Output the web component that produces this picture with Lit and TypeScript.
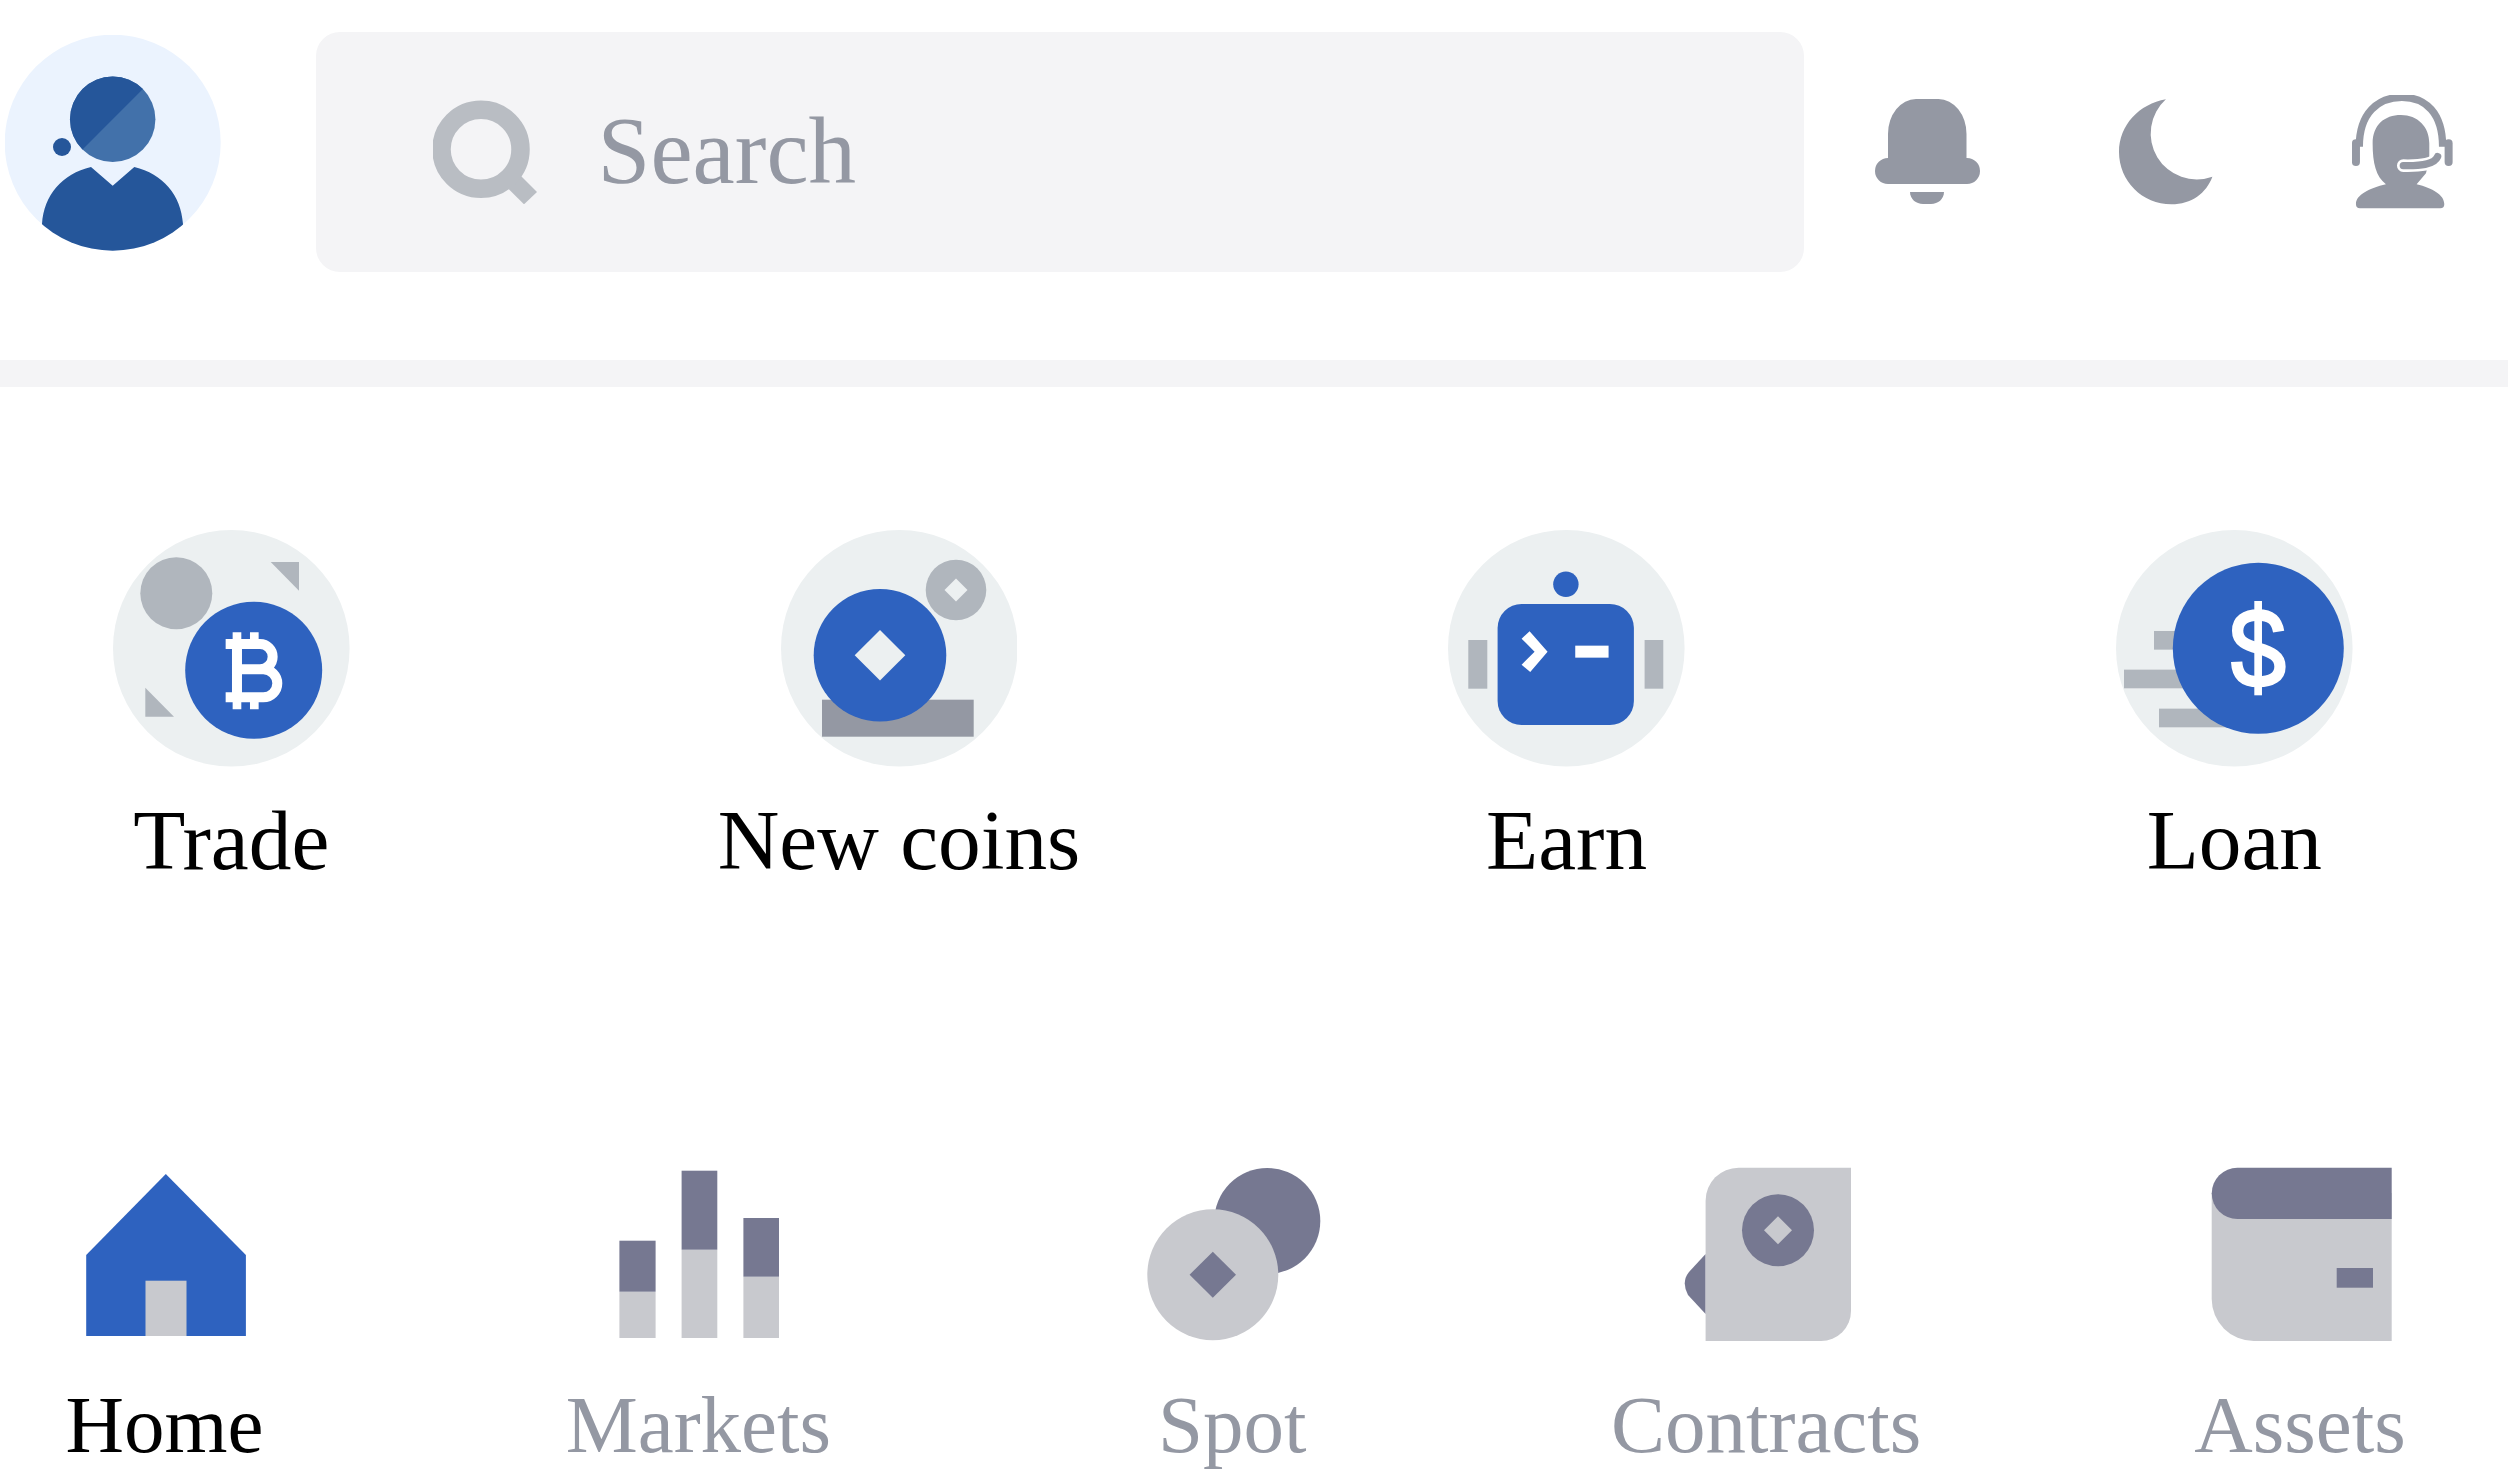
import { LitElement, html, css, svg } from "lit";
import { customElement } from "lit/decorators.js";

const BLUE = "#2e62bf";
const BG = "#ecf0f1";
const GR = "#b0b6bd";
const DK = "#767891";
const LT = "#c8c9ce";
const ICON = "#9498a3";

const tradeIcon = svg`
  <circle cx="231.3" cy="648.3" r="118.3" fill="${BG}"/>
  <circle cx="176.3" cy="593.3" r="36" fill="${GR}"/>
  <polygon points="270.7,562 299,562 299,590.7" fill="${GR}"/>
  <polygon points="145.3,687.7 145.3,716.7 174,716.7" fill="${GR}"/>
  <circle cx="253.7" cy="670.3" r="68.5" fill="${BLUE}"/>
  <g transform="translate(80 500) scale(.3333)" fill="none" stroke="#fff" stroke-width="30">
    <path d="M437 432H540A38 38 0 0 1 540 508H471M471 508H550A42 42 0 0 1 550 592H437M471 432V592"/>
    <path d="M471 397V432M523 397V432M471 628V592M523 628V592" stroke-width="26"/>
  </g>`;

const coinsIcon = svg`
  <circle cx="899.3" cy="648.3" r="118.3" fill="${BG}"/>
  <rect x="822" y="699.7" width="151.7" height="37" fill="${ICON}"/>
  <circle cx="880" cy="655.3" r="66.3" fill="${BLUE}"/>
  <polygon points="880,630 905.3,655.3 880,680.6 854.7,655.3" fill="${BG}"/>
  <circle cx="956" cy="590" r="30.3" fill="${GR}"/>
  <polygon points="956,578.5 967.5,590 956,601.5 944.5,590" fill="${BG}"/>`;

const earnIcon = svg`
  <circle cx="1566.7" cy="648.3" r="118.3" fill="${BG}"/>
  <circle cx="1566.3" cy="584.3" r="12.7" fill="${BLUE}"/>
  <rect x="1468.7" y="640" width="19" height="48.7" fill="${GR}"/>
  <rect x="1645" y="640" width="18.7" height="48.7" fill="${GR}"/>
  <rect x="1498" y="604" width="136.3" height="121" rx="24" fill="${BLUE}"/>
  <g transform="translate(1420 500) scale(.3333)" fill="#fff">
    <polygon points="330,394 384,455 332,516 306,494 345,455 306,416"/>
    <rect x="467" y="437" width="100" height="36"/>
  </g>`;

const loanIcon = svg`
  <circle cx="2234.3" cy="648.3" r="118.3" fill="${BG}"/>
  <g transform="translate(2090 500) scale(.3333)">
    <rect x="192" y="393" width="150" height="56" fill="${GR}"/>
    <rect x="102" y="509" width="240" height="56" fill="${GR}"/>
    <rect x="207" y="626" width="240" height="56" fill="${GR}"/>
    <circle cx="505" cy="445" r="256.5" fill="${BLUE}"/>
    <rect x="493" y="303" width="23" height="283" fill="#fff"/>
    <path d="M566 395C560 360 540 345 505 345C465 345 443 362 443 392C443 425 470 435 505 445C545 457 570 468 570 500C570 530 545 545 505 545C465 545 442 528 440 485" fill="none" stroke="#fff" stroke-width="34"/>
  </g>`;

const homeIcon = svg`
  <polygon points="165.3,1174 245.4,1255 245.4,1336 85.7,1336 85.7,1255" fill="${BLUE}"/>
  <rect x="145" y="1280.7" width="41" height="55.3" fill="${LT}"/>`;

const marketsIcon = svg`
  <rect x="619.4" y="1291.7" width="36.2" height="46.3" fill="${LT}"/>
  <rect x="619.4" y="1240.7" width="36.2" height="51" fill="${DK}"/>
  <rect x="681.6" y="1249.7" width="35.7" height="88.3" fill="${LT}"/>
  <rect x="681.6" y="1170.7" width="35.7" height="79" fill="${DK}"/>
  <rect x="743.4" y="1276.7" width="35.6" height="61.3" fill="${LT}"/>
  <rect x="743.4" y="1218" width="35.6" height="58.7" fill="${DK}"/>`;

const spotIcon = svg`
  <circle cx="1267.3" cy="1221" r="53" fill="${DK}"/>
  <circle cx="1212.8" cy="1274.7" r="65.5" fill="${LT}"/>
  <polygon points="1212.8,1251.7 1236,1274.7 1212.8,1297.7 1189.6,1274.7" fill="${DK}"/>`;

const contractsIcon = svg`
  <path d="M1705.6 1254L1689 1272Q1681 1282 1688 1295L1705.6 1314Z" fill="${DK}"/>
  <path d="M1738.6 1167.7H1851V1311A30 30 0 0 1 1821 1341H1705.6V1200.7A33 33 0 0 1 1738.6 1167.7Z" fill="${LT}"/>
  <circle cx="1778" cy="1230.3" r="36" fill="${DK}"/>
  <polygon points="1778,1216.3 1792,1230.3 1778,1244.3 1764,1230.3" fill="${LT}"/>`;

const assetsIcon = svg`
  <path d="M2211.7 1193H2391.7V1341H2253.7A42 42 0 0 1 2211.7 1299Z" fill="${LT}"/>
  <path d="M2237.4 1167.7H2391.7V1219H2237.4A25.65 25.65 0 0 1 2237.4 1167.7Z" fill="${DK}"/>
  <rect x="2336.7" y="1268" width="36.3" height="19.7" fill="${DK}"/>`;

const quick = [
  { label: "Trade", box: "113 530 236.6 236.6", g: tradeIcon },
  { label: "New coins", box: "781 530 236.6 236.6", g: coinsIcon },
  { label: "Earn", box: "1448.4 530 236.6 236.6", g: earnIcon },
  { label: "Loan", box: "2116 530 236.6 236.6", g: loanIcon },
];

const nav = [
  { label: "Home", box: "64.5 1167 200 175", g: homeIcon, active: true },
  { label: "Markets", box: "598 1167 200 175", g: marketsIcon, active: false },
  { label: "Spot", box: "1132 1167 200 175", g: spotIcon, active: false },
  { label: "Contracts", box: "1666 1167 200 175", g: contractsIcon, active: false },
  { label: "Assets", box: "2200 1167 200 175", g: assetsIcon, active: false },
];

@customElement("app-root")
export class AppRoot extends LitElement {
  static styles = css`
    :host {
      display: block;
      width: 2508px;
      height: 1470px;
      overflow: hidden;
      background: #fff;
      font-family: "Liberation Serif", "Times New Roman", serif;
      color: #000;
    }
    svg { display: block; flex: none; }
    .header {
      display: flex;
      align-items: flex-start;
      box-sizing: border-box;
      height: 360px;
      padding: 32px 0 0 5px;
    }
    .avatar { width: 216px; height: 216px; margin-top: 3px; }
    .search {
      display: flex;
      align-items: center;
      box-sizing: border-box;
      width: 1488px;
      height: 240px;
      margin-left: 95px;
      padding: 0 0 3px 117px;
      border-radius: 24px;
      background: #f4f4f6;
      font-size: 95px;
      color: #9498a3;
    }
    .search svg { width: 104px; height: 106px; margin-right: 60.6px; }
    .tools {
      display: flex;
      gap: 139px;
      margin: 63px 0 0 71px;
    }
    .bell { width: 105px; height: 115px; }
    .moon { width: 94px; height: 115px; }
    .agent { width: 102px; height: 115px; }
    .divider { height: 27px; background: #f4f4f6; }
    .quick {
      display: flex;
      justify-content: space-between;
      padding: 143px 155.4px 0 113px;
    }
    .quick-item {
      display: flex;
      flex-direction: column;
      align-items: center;
      width: 236.6px;
      font-size: 85.33px;
      white-space: nowrap;
    }
    .quick-item svg { width: 236.6px; height: 236.6px; margin-bottom: 24px; }
    .nav {
      display: flex;
      justify-content: space-between;
      margin-top: 278px;
      padding: 0 108px 0 64.5px;
    }
    .nav-item {
      display: flex;
      flex-direction: column;
      align-items: center;
      width: 200px;
      font-size: 81px;
      line-height: 81px;
      white-space: nowrap;
      color: #9498a3;
    }
    .nav-item.active { color: #000; }
    .nav-item svg { width: 200px; height: 175px; margin-bottom: 43px; }
  `;

  render() {
    return html`
      <div class="header">
        <svg class="avatar" viewBox="5 35 216 216">
          <defs><clipPath id="av"><circle cx="112.7" cy="142.7" r="108"/></clipPath></defs>
          <circle cx="112.7" cy="142.7" r="108" fill="#ebf3fe"/>
          <circle cx="112.7" cy="119.3" r="42.7" fill="#4271aa"/>
          <path d="M142.9 89.1A42.7 42.7 0 0 0 82.5 149.5Z" fill="#25569a"/>
          <circle cx="62" cy="147" r="9" fill="#25569a"/>
          <path clip-path="url(#av)" d="M42 262V224C44 195 62 174 91 167L112.7 185.7L134.3 167C163 174 181 195 183 224V262Z" fill="#25569a"/>
        </svg>
        <div class="search">
          <svg viewBox="433 97 104 106">
            <polygon points="521,175 537,191 524,203.3 508.6,188" fill="#b9bdc3"/>
            <circle cx="481" cy="148.3" r="39.5" fill="none" stroke="#b9bdc3" stroke-width="18.5"/>
          </svg>
          <span>Search</span>
        </div>
        <div class="tools">
          <svg class="bell" viewBox="1875 95 105 115" fill="${ICON}">
            <path d="M1888 158V134A28 35 0 0 1 1916 99H1938.5A28 35 0 0 1 1966.5 134V158H1967A13 13 0 0 1 1967 184H1888A13 13 0 0 1 1888 158Z"/>
            <path d="M1910 192H1944C1944 199 1938 204 1931 204H1923C1916 204 1910 199 1910 192Z"/>
          </svg>
          <svg class="moon" viewBox="2119.6 95 94 115" fill="${ICON}">
            <path d="M2166.5 99.3C2140 104 2119.6 125 2119.6 152C2119.6 181 2143 204.3 2172 204.3C2192 204.3 2207 193 2213 176.7A46 46 0 0 1 2166.5 99.3Z"/>
          </svg>
          <svg class="agent" viewBox="2352.7 95 102 115">
            <g transform="translate(2330 80) scale(.3333)">
              <path d="M90 200C90 100 145 52 218 52C290 52 340 100 340 200" fill="none" stroke="${ICON}" stroke-width="22"/>
              <rect x="68" y="178" width="24" height="80" rx="12" fill="${ICON}"/>
              <rect x="346" y="178" width="24" height="80" rx="12" fill="${ICON}"/>
              <path d="M130 190C130 135 165 105 215 105C265 105 300 140 300 190V240L290 280L262 313C310 325 345 345 345 372Q345 385 333 385H92Q80 385 80 372C80 345 120 325 170 313C140 290 130 250 130 190Z" fill="${ICON}"/>
              <path d="M222 257C270 258 315 255 325 230" fill="none" stroke="#fff" stroke-width="38" stroke-linecap="round"/>
              <path d="M222 257C270 258 315 255 325 230" fill="none" stroke="${ICON}" stroke-width="22" stroke-linecap="round"/>
            </g>
          </svg>
        </div>
      </div>
      <div class="divider"></div>
      <div class="quick">
        ${quick.map(
          (q) => html`<div class="quick-item">
            <svg viewBox="${q.box}">${q.g}</svg>
            <span>${q.label}</span>
          </div>`
        )}
      </div>
      <div class="nav">
        ${nav.map(
          (n) => html`<div class="nav-item ${n.active ? "active" : ""}">
            <svg viewBox="${n.box}">${n.g}</svg>
            <span>${n.label}</span>
          </div>`
        )}
      </div>
    `;
  }
}
